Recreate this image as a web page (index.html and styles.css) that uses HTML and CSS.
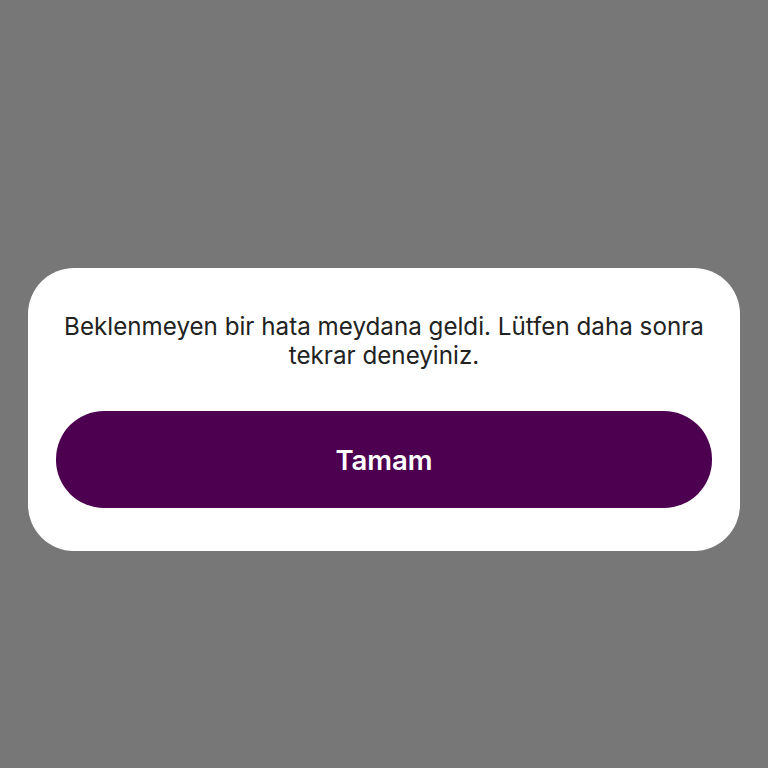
FILE: index.html
```html
<!DOCTYPE html>
<html lang="tr">

<head>
  <meta charset="utf-8">
  <title>Hata</title>
  <link rel="stylesheet" href="styles.css">
</head>

<body>
  <div class="overlay">
    <div class="dialog">
      <p class="message">Beklenmeyen bir hata meydana geldi. Lütfen daha sonra tekrar deneyiniz.</p>
      <button class="ok">Tamam</button>
    </div>
  </div>
</body>

</html>
```

FILE: styles.css
```css
*,
*:before,
*:after {
  box-sizing: border-box
}

* {
  margin: 0;
  padding: 0
}

html,
body {
  height: 100%
}

body {
  background: #777777;
  font-family: Inter, 'Noto Sans', sans-serif
}

.overlay {
  padding: 268px 28px 0
}

.dialog {
  background: #ffffff;
  border-radius: 46px;
  padding: 44px 28px 43px;
  display: flex;
  flex-direction: column;
  align-items: stretch
}

.message {
  font-size: 24.2px;
  line-height: 29px;
  color: #222222;
  text-align: center;
  margin-bottom: 41px
}

.ok {
  height: 97px;
  border: none;
  border-radius: 48px;
  background: #4d0050;
  color: #ffffff;
  font: inherit;
  font-size: 27.5px;
  font-weight: 600;
  cursor: pointer
}
```
